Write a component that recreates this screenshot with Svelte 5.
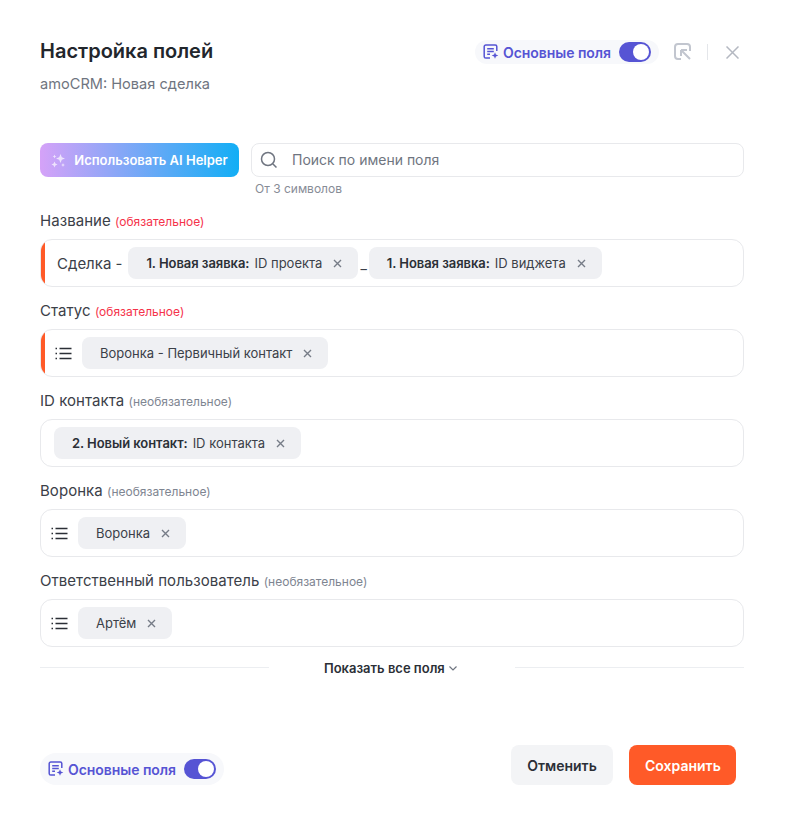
<script>
  const fields = [
    { label: "Статус", required: true, list: true, chips: [{ text: "Воронка - Первичный контакт" }] },
    { label: "ID контакта", required: false, list: false, chips: [{ bold: "2. Новый контакт:", text: "ID контакта" }] },
    { label: "Воронка", required: false, list: true, chips: [{ text: "Воронка" }] },
    { label: "Ответственный пользователь", required: false, list: true, chips: [{ text: "Артём" }] },
  ];
</script>

{#snippet fieldsIcon()}
  <svg class="fields-icon" width="16" height="16" viewBox="0 0 16 16" fill="none" stroke="currentColor" stroke-width="1.5">
    <path d="M7 14H2.800a1.600 1.600 0 0 1-1.600-1.600V2.600A1.600 1.600 0 0 1 2.800 1h9.400a1.600 1.600 0 0 1 1.600 1.600V7" />
    <path d="M4.200 4.700h6.600M4.200 7.500h6.600M4.200 10.300h2.800" />
    <path d="M12 8.200l.9 2.400 2.400.9-2.400.9-.9 2.400-.9-2.400-2.400-.9 2.400-.9z" fill="currentColor" stroke="none" />
  </svg>
{/snippet}

{#snippet toggle()}
  <span class="toggle"><span class="knob"></span></span>
{/snippet}

{#snippet close()}
  <svg class="chip-x" width="9" height="9" viewBox="0 0 9 9" fill="none" stroke="currentColor" stroke-width="1.4">
    <path d="M1 1l7 7M8 1L1 8" />
  </svg>
{/snippet}

{#snippet chip(c)}
  <span class="chip">
    {#if c.bold}<b>{c.bold}</b>{/if}
    <span>{c.text}</span>
    {@render close()}
  </span>
{/snippet}

{#snippet listIcon()}
  <svg class="list-icon" width="17" height="13" viewBox="0 0 17 13" fill="none" stroke="#2b2f36" stroke-width="1.3">
    <path d="M4.500 1.500H16.500M4.500 6.500H16.500M4.500 11.500H16.500" />
    <path d="M.5 1.500H2M.5 6.500H2M.5 11.500H2" />
  </svg>
{/snippet}

<div class="modal">
  <header class="head">
    <div>
      <h1>Настройка полей</h1>
      <p class="sub">amoCRM: Новая сделка</p>
    </div>
    <div class="head-actions">
      <div class="pill">
        {@render fieldsIcon()}
        <span>Основные поля</span>
        {@render toggle()}
      </div>
      <svg class="collapse" width="18" height="18" viewBox="0 0 18 18" fill="none" stroke="#c2c6cf" stroke-width="2">
        <path d="M7 16H4a3 3 0 0 1-3-3V4a3 3 0 0 1 3-3h9a3 3 0 0 1 3 3v4" />
        <path d="M7 7h6M7 7v6M7 7l9 9" />
      </svg>
      <span class="sep"></span>
      <svg class="dismiss" width="13" height="13" viewBox="0 0 13 13" fill="none" stroke="#b4b8c1" stroke-width="1.5">
        <path d="M.5.5l12 12M12.500.5l-12 12" />
      </svg>
    </div>
  </header>

  <div class="tools">
    <button class="ai-btn">
      <svg width="16" height="16" viewBox="0 0 16 16" fill="#fff" opacity="0.7">
        <path d="M9.500 2l1.300 3.200L14 6.500l-3.200 1.300L9.500 11 8.200 7.800 5 6.500l3.200-1.300z" />
        <path d="M3.500 9.500l.9 2.100 2.100.9-2.100.9-.9 2.100-.9-2.100-2.100-.9 2.100-.9z" />
        <path d="M3.500 2.500l.6 1.400 1.400.6-1.400.6-.6 1.400-.6-1.400L1.500 4.500l1.400-.6z" />
        <path d="M12 11l.6 1.400 1.400.6-1.400.6-.6 1.400-.6-1.400-1.400-.6 1.400-.6z" />
      </svg>
      Использовать AI Helper
    </button>
    <div class="search-wrap">
      <div class="search">
        <svg width="18" height="18" viewBox="0 0 18 18" fill="none" stroke="#6f7580" stroke-width="1.5">
          <circle cx="8" cy="8" r="6.500" />
          <path d="M13 13l3.500 3.500" />
        </svg>
        <span class="placeholder">Поиск по имени поля</span>
      </div>
      <div class="hint">От 3 символов</div>
    </div>
  </div>

  <div class="group first">
    <div class="label">Название <small class="req">(обязательное)</small></div>
    <div class="box mandatory title-box">
      <span class="plain">Сделка -</span>
      {@render chip({ bold: "1. Новая заявка:", text: "ID проекта" })}
      <span class="plain under">_</span>
      {@render chip({ bold: "1. Новая заявка:", text: "ID виджета" })}
    </div>
  </div>

  {#each fields as f}
    <div class="group">
      <div class="label">
        {f.label}
        <small class:req={f.required}>({f.required ? "обязательное" : "необязательное"})</small>
      </div>
      <div class="box" class:mandatory={f.required} class:with-list={f.list}>
        {#if f.list}{@render listIcon()}{/if}
        {#each f.chips as c}{@render chip(c)}{/each}
      </div>
    </div>
  {/each}

  <div class="more">
    <span class="line"></span>
    <span class="more-text">Показать все поля
      <svg width="8" height="5" viewBox="0 0 8 5" fill="none" stroke="#6f7580" stroke-width="1.2"><path d="M.5.5L4 4 7.500.5" /></svg>
    </span>
    <span class="line"></span>
  </div>

  <footer class="foot">
    <div class="pill low">
      {@render fieldsIcon()}
      <span>Основные поля</span>
      {@render toggle()}
    </div>
    <div class="buttons">
      <button class="cancel">Отменить</button>
      <button class="save">Сохранить</button>
    </div>
  </footer>
</div>

<style>
  :global(body) {
    margin: 0;
    background: #fff;
  }

  .modal {
    width: 787px;
    height: 820px;
    box-sizing: border-box;
    padding: 40px 43px 0 40px;
    font-family: Inter, "Noto Sans", sans-serif;
    color: #2b2f36;
  }

  .head {
    display: flex;
    justify-content: space-between;
    align-items: flex-start;
    height: 103px;
  }

  h1 {
    margin: 0;
    font-size: 20px;
    line-height: 23px;
    font-weight: 600;
    color: #22262c;
  }

  .sub {
    margin: 9px 0 0;
    font-size: 14.600px;
    line-height: 24px;
    color: #6f7580;
  }

  .head-actions {
    display: flex;
    align-items: center;
    height: 24px;
    padding-right: 5px;
  }

  .pill {
    display: flex;
    align-items: center;
    height: 24px;
    padding: 0 8px;
    gap: 4px;
    border-radius: 12px;
    background: #f7f8fb;
    color: #5654d4;
    font-size: 14px;
    font-weight: 600;
    letter-spacing: -0.05px;
  }

  .pill.low {
    height: 32px;
    border-radius: 16px;
  }

  .fields-icon {
    flex-shrink: 0;
  }

  .toggle {
    display: block;
    width: 32px;
    height: 20px;
    margin-left: 4px;
    border-radius: 10px;
    background: #5654d4;
    position: relative;
  }

  .knob {
    position: absolute;
    top: 2px;
    right: 2px;
    width: 16px;
    height: 16px;
    border-radius: 50%;
    background: #fff;
  }

  .collapse {
    margin-left: 15px;
  }

  .sep {
    width: 1px;
    height: 16px;
    margin: 0 18px 0 15px;
    background: #e4e6ea;
  }

  .tools {
    display: flex;
    gap: 12px;
  }

  .ai-btn {
    display: flex;
    align-items: center;
    justify-content: center;
    gap: 7px;
    width: 199px;
    height: 34px;
    padding: 0;
    border: 0;
    border-radius: 8px;
    background: linear-gradient(90deg, #d5a2f8 0%, #12aef5 100%);
    color: #fff;
    font: 600 13px Inter, sans-serif;
  }

  .search-wrap {
    flex: 1;
  }

  .search {
    display: flex;
    align-items: center;
    gap: 14px;
    height: 34px;
    box-sizing: border-box;
    padding: 0 8px;
    border: 1px solid #e8e9ec;
    border-radius: 8px;
    font-size: 14px;
    color: #6f7580;
  }

  .placeholder {
    margin-bottom: 2px;
  }

  .hint {
    margin-top: 4px;
    padding-left: 4px;
    font-size: 12px;
    line-height: 15px;
    color: #878c96;
  }

  .group {
    margin-top: 14px;
  }

  .group.first {
    margin-top: 15px;
  }

  .label {
    height: 20px;
    margin-bottom: 8px;
    font-size: 15px;
    line-height: 20px;
    letter-spacing: 0.05px;
    color: #3b4048;
  }

  small {
    font-size: 12px;
    letter-spacing: 0;
    color: #7e8591;
  }

  small.req {
    color: #f5324a;
  }

  .box {
    display: flex;
    align-items: center;
    height: 48px;
    box-sizing: border-box;
    padding: 0 13px;
    border: 1px solid #e8e9ec;
    border-radius: 12px;
    overflow: hidden;
    position: relative;
  }

  .box.with-list {
    gap: 10px;
    padding-left: 10px;
  }

  .box.mandatory::before {
    content: "";
    position: absolute;
    left: -1px;
    top: -1px;
    bottom: -1px;
    width: 5px;
    background: #ff5a28;
  }

  .box.mandatory.with-list {
    padding-left: 14px;
  }

  .title-box {
    padding-left: 16px;
  }

  .plain {
    font-size: 15px;
    white-space: pre;
    color: #3b4048;
  }

  .title-box .plain:first-child {
    margin-right: 6px;
  }

  .under {
    margin: 0 2px;
    font-size: 14px;
  }

  .chip {
    display: inline-flex;
    align-items: center;
    height: 32px;
    padding: 0 16px 0 18px;
    border-radius: 8px;
    background: #eff0f3;
    font-size: 13px;
    color: #3b4048;
    white-space: nowrap;
  }

  .chip b {
    margin-right: 5px;
    font-weight: 600;
    color: #2b2f36;
    letter-spacing: -0.05px;
  }

  .chip-x {
    margin-left: 11px;
    color: #767c87;
  }

  .more {
    display: flex;
    align-items: center;
    margin-top: 12px;
    height: 16px;
  }

  .line {
    flex: 1;
    height: 1px;
    background: #eceef1;
  }

  .more-text {
    width: 246px;
    margin-top: 2px;
    padding-right: 3px;
    box-sizing: border-box;
    text-align: center;
    font-size: 13px;
    font-weight: 600;
    color: #2b2f36;
  }

  .more-text svg {
    margin-left: 1px;
    vertical-align: 2px;
  }

  .foot {
    display: flex;
    justify-content: space-between;
    align-items: flex-end;
    margin-top: 70px;
    padding-right: 8px;
  }

  .buttons {
    display: flex;
    gap: 16px;
  }

  button {
    cursor: pointer;
  }

  .cancel,
  .save {
    height: 40px;
    padding: 0 16px;
    border: 0;
    border-radius: 8px;
    font: 600 14px Inter, sans-serif;
  }

  .cancel {
    width: 102px;
    background: #f3f4f6;
    color: #2b2f36;
  }

  .save {
    width: 107px;
    background: #ff5a28;
    color: #fff;
  }
</style>
